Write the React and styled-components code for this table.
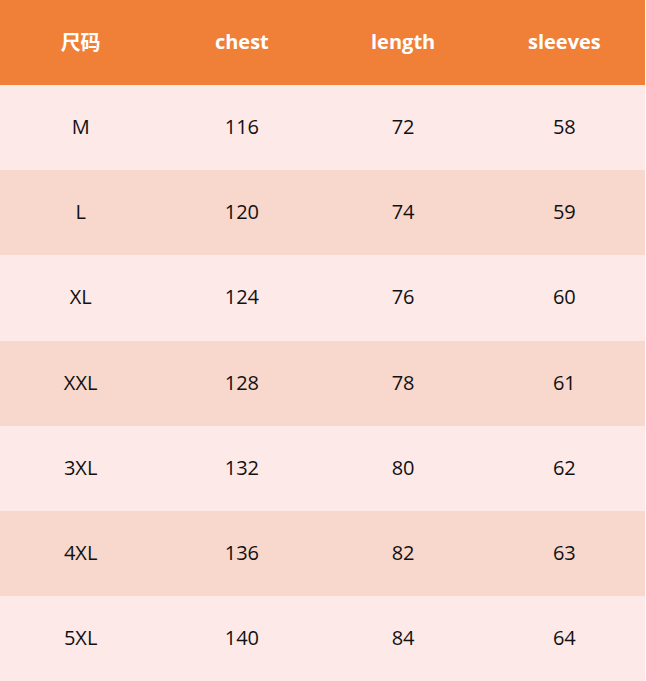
import styled, { createGlobalStyle } from "styled-components";

const GlobalStyle = createGlobalStyle`
  html, body {
    margin: 0;
    padding: 0;
    background: #ffffff;
  }
`;

const rows = [
  ["M", "116", "72", "58"],
  ["L", "120", "74", "59"],
  ["XL", "124", "76", "60"],
  ["XXL", "128", "78", "61"],
  ["3XL", "132", "80", "62"],
  ["4XL", "136", "82", "63"],
  ["5XL", "140", "84", "64"],
];

const Table = styled.div`
  width: 645px;
  display: grid;
  grid-template-rows: repeat(8, 85.125px);
  font-family: "Open Sans", "Noto Sans CJK SC", sans-serif;
`;

const Row = styled.div`
  display: grid;
  grid-template-columns: repeat(4, 1fr);
  align-items: center;
  padding-bottom: 2px;
  background: ${(p) =>
    p.$head ? "#f07f38" : p.$alt ? "#f8d7cc" : "#fde9e7"};
  color: ${(p) => (p.$head ? "#ffffff" : "#111111")};
  font-size: ${(p) => (p.$head ? "20px" : "20px")};
  font-weight: ${(p) => (p.$head ? 700 : 400)};
`;

const Cell = styled.div`
  text-align: center;
`;

export default function App() {
  return (
    <>
      <GlobalStyle />
      <Table>
        <Row $head>
          <Cell>尺码</Cell>
          <Cell>chest</Cell>
          <Cell>length</Cell>
          <Cell>sleeves</Cell>
        </Row>
        {rows.map((r, i) => (
          <Row key={r[0]} $alt={i % 2 === 1}>
            {r.map((v, j) => (
              <Cell key={j}>{v}</Cell>
            ))}
          </Row>
        ))}
      </Table>
    </>
  );
}
